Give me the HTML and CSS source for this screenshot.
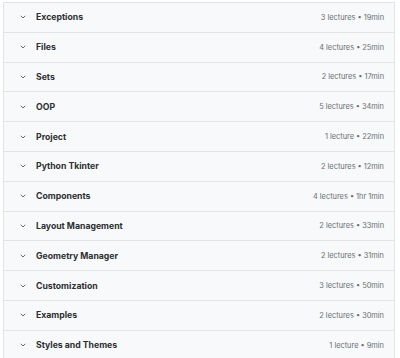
FILE: index.html
```html
<!DOCTYPE html>
<html lang="en">
<head>
    <meta charset="UTF-8">
    <meta name="viewport" content="width=device-width, initial-scale=1.0">
    <title>Course content</title>
    <link rel="stylesheet" href="styles.css">
</head>
<body>
    <div class="curriculum">
        <div class="section">
            <div class="section-title">
                <svg class="chevron" viewBox="0 0 6 4"><path d="M0.8 0.8 L3 3 L5.2 0.8"/></svg>
                <h3>Exceptions</h3>
            </div>
            <span class="meta">3 lectures • 19min</span>
        </div>
        <div class="section">
            <div class="section-title">
                <svg class="chevron" viewBox="0 0 6 4"><path d="M0.8 0.8 L3 3 L5.2 0.8"/></svg>
                <h3>Files</h3>
            </div>
            <span class="meta">4 lectures • 25min</span>
        </div>
        <div class="section">
            <div class="section-title">
                <svg class="chevron" viewBox="0 0 6 4"><path d="M0.8 0.8 L3 3 L5.2 0.8"/></svg>
                <h3>Sets</h3>
            </div>
            <span class="meta">2 lectures • 17min</span>
        </div>
        <div class="section">
            <div class="section-title">
                <svg class="chevron" viewBox="0 0 6 4"><path d="M0.8 0.8 L3 3 L5.2 0.8"/></svg>
                <h3>OOP</h3>
            </div>
            <span class="meta">5 lectures • 34min</span>
        </div>
        <div class="section">
            <div class="section-title">
                <svg class="chevron" viewBox="0 0 6 4"><path d="M0.8 0.8 L3 3 L5.2 0.8"/></svg>
                <h3>Project</h3>
            </div>
            <span class="meta">1 lecture • 22min</span>
        </div>
        <div class="section">
            <div class="section-title">
                <svg class="chevron" viewBox="0 0 6 4"><path d="M0.8 0.8 L3 3 L5.2 0.8"/></svg>
                <h3>Python Tkinter</h3>
            </div>
            <span class="meta">2 lectures • 12min</span>
        </div>
        <div class="section">
            <div class="section-title">
                <svg class="chevron" viewBox="0 0 6 4"><path d="M0.8 0.8 L3 3 L5.2 0.8"/></svg>
                <h3>Components</h3>
            </div>
            <span class="meta">4 lectures • 1hr 1min</span>
        </div>
        <div class="section">
            <div class="section-title">
                <svg class="chevron" viewBox="0 0 6 4"><path d="M0.8 0.8 L3 3 L5.2 0.8"/></svg>
                <h3>Layout Management</h3>
            </div>
            <span class="meta">2 lectures • 33min</span>
        </div>
        <div class="section">
            <div class="section-title">
                <svg class="chevron" viewBox="0 0 6 4"><path d="M0.8 0.8 L3 3 L5.2 0.8"/></svg>
                <h3>Geometry Manager</h3>
            </div>
            <span class="meta">2 lectures • 31min</span>
        </div>
        <div class="section">
            <div class="section-title">
                <svg class="chevron" viewBox="0 0 6 4"><path d="M0.8 0.8 L3 3 L5.2 0.8"/></svg>
                <h3>Customization</h3>
            </div>
            <span class="meta">3 lectures • 50min</span>
        </div>
        <div class="section">
            <div class="section-title">
                <svg class="chevron" viewBox="0 0 6 4"><path d="M0.8 0.8 L3 3 L5.2 0.8"/></svg>
                <h3>Examples</h3>
            </div>
            <span class="meta">2 lectures • 30min</span>
        </div>
        <div class="section">
            <div class="section-title">
                <svg class="chevron" viewBox="0 0 6 4"><path d="M0.8 0.8 L3 3 L5.2 0.8"/></svg>
                <h3>Styles and Themes</h3>
            </div>
            <span class="meta">1 lecture • 9min</span>
        </div>
    </div>
</body>
</html>
```

FILE: styles.css
```css
* {
    margin: 0;
    padding: 0;
    box-sizing: border-box;
}

body {
    background-color: white;
    font-family: Inter, "Liberation Sans", sans-serif;
    color: #2d2f31;
}

.curriculum {
    margin: 2px 0 0 3px;
    width: 392px;
    border: 1px solid #e2e5e8;
    border-bottom: none;
}

.section {
    height: 29.8px;
    display: flex;
    align-items: center;
    justify-content: space-between;
    padding: 0 10px 0 16px;
    background-color: #f7f9fa;
    border-bottom: 1px solid #e2e5e8;
}

.section-title {
    display: flex;
    align-items: center;
    gap: 10px;
}

.chevron {
    width: 6px;
    height: 4px;
    fill: none;
    stroke: #55595c;
    stroke-width: 0.9;
}

.section h3 {
    font-size: 8.7px;
    font-weight: 700;
}

.meta {
    font-size: 7.4px;
    color: #6a6f73;
}
```
